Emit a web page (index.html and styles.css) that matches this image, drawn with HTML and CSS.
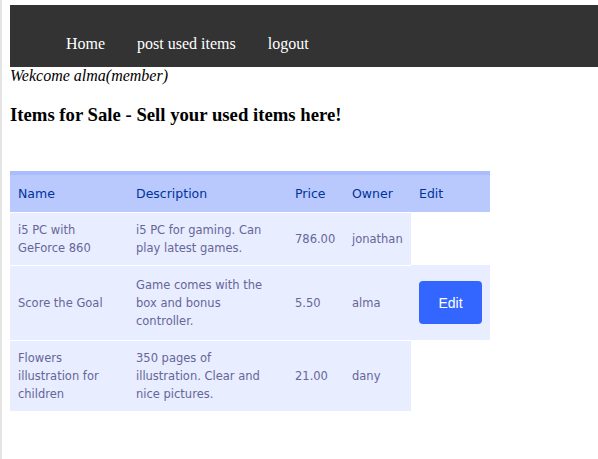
FILE: index.html
```html
<!DOCTYPE html>
<html>
<head>
<meta charset="utf-8">
<title>Items for Sale</title>
<link rel="stylesheet" href="styles.css">
</head>
<body>
<nav class="nav">
  <ul class="nav-list">
    <li><a class="nav-link" href="#">Home</a></li>
    <li><a class="nav-link" href="#">post used items</a></li>
    <li><a class="nav-link" href="#">logout</a></li>
  </ul>
</nav>
<div class="welcome">Wekcome alma(member)</div>
<h3 class="title">Items for Sale - Sell your used items here!</h3>
<table class="items">
  <thead>
    <tr>
      <th class="c-name">Name</th>
      <th class="c-desc">Description</th>
      <th class="c-price">Price</th>
      <th class="c-owner">Owner</th>
      <th class="c-edit">Edit</th>
    </tr>
  </thead>
  <tbody>
    <tr>
      <td>i5 PC with GeForce 860</td>
      <td>i5 PC for gaming. Can play latest games.</td>
      <td>786.00</td>
      <td>jonathan</td>
    </tr>
    <tr>
      <td>Score the Goal</td>
      <td>Game comes with the box and bonus controller.</td>
      <td>5.50</td>
      <td>alma</td>
      <td><button class="edit-btn" type="button">Edit</button></td>
    </tr>
    <tr>
      <td>Flowers illustration for children</td>
      <td>350 pages of illustration. Clear and nice pictures.</td>
      <td>21.00</td>
      <td>dany</td>
    </tr>
  </tbody>
</table>
</body>
</html>
```
FILE: styles.css
```css
html {
  border-left: 2px solid #e4e4e4;
  background: #fff;
  min-height: 100%;
}
body {
  margin: 5px 0 0 8px;
  font-family: "Liberation Serif", "Times New Roman", serif;
  font-size: 16px;
  color: #000;
}
.nav {
  background: #333333;
  height: 62px;
  box-sizing: border-box;
  padding-top: 30px;
}
.nav-list {
  list-style: none;
  margin: 0;
  padding: 0 0 0 40px;
  display: flex;
  line-height: 18px;
}
.nav-link {
  display: block;
  padding: 0 16px;
  color: #fff;
  text-decoration: none;
}
.welcome {
  font-style: italic;
  line-height: 18px;
}
.title {
  font-size: 18.72px;
  margin: 18.72px 0 0;
}
.items {
  margin-top: 45px;
  border-collapse: collapse;
  font-family: "DejaVu Sans", "Lucida Sans Unicode", sans-serif;
  font-size: 11.5px;
  text-align: left;
}
.items th {
  font-size: 12.5px;
  font-weight: normal;
  padding: 8px;
  line-height: 21px;
  background: #b9c9fe;
  border-top: 4px solid #aabcfe;
  border-bottom: 1px solid #fff;
  color: #003399;
}
.items td {
  padding: 8px;
  line-height: 18px;
  background: #e8edff;
  border-bottom: 1px solid #fff;
  color: #666699;
  vertical-align: middle;
}
.c-name { width: 102px; }
.c-desc { width: 143px; }
.c-price { width: 41px; }
.c-owner { width: 51px; }
.c-edit { width: 63px; }
.edit-btn {
  display: block;
  width: 63px;
  height: 43px;
  margin: 8px 0;
  border: none;
  border-radius: 4px;
  background: #3366ff;
  color: #fff;
  font-family: "Liberation Sans", Arial, sans-serif;
  font-size: 14px;
}
```
